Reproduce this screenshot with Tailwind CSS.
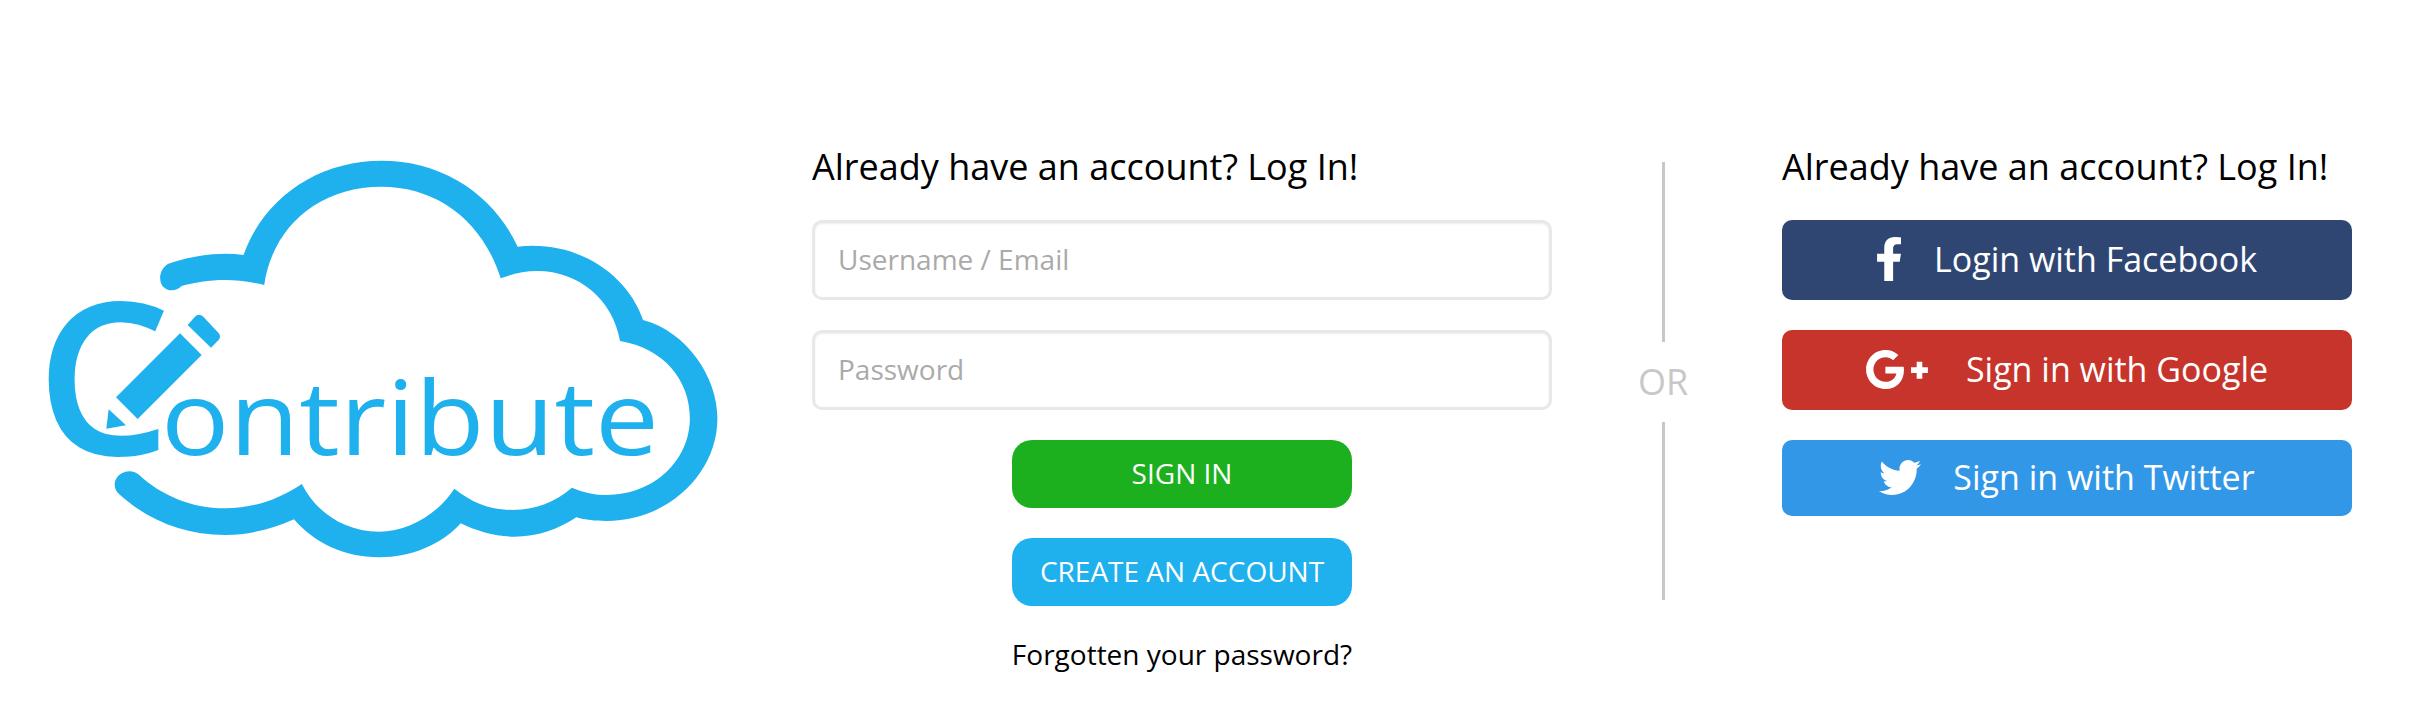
<!doctype html>
<html lang="en">
<head>
<meta charset="utf-8">
<title>Contribute login</title>
<script src="https://cdn.jsdelivr.net/npm/@tailwindcss/browser@4"></script>
</head>
<body class="bg-white font-['Open_Sans',sans-serif] text-black overflow-hidden">
<main class="flex items-start h-[710px] pt-[140px] pl-[30px]">
  <svg class="shrink-0 w-[720px] h-[440px]" viewBox="0 0 720 440" aria-label="Contribute logo">
    <g fill="#1fb0ee">
      <g transform="scale(0.4592 0.3333)">
        <path d="M300 372C350 348 410 335 465 345C510 170 630 62 765 62C900 62 1010 165 1062 320C1190 300 1300 400 1335 540C1430 575 1497 710 1497 835C1497 1000 1390 1143 1255 1143C1230 1143 1210 1140 1190 1132C1150 1168 1105 1190 1055 1190C1015 1190 975 1175 938 1150C895 1215 830 1252 760 1252C685 1252 620 1210 575 1138C530 1165 480 1185 425 1185C335 1185 255 1140 192 1060C178 1040 185 1010 200 1000C212 990 228 992 238 1005C285 1065 350 1105 425 1105C490 1105 545 1075 592 1032C620 1110 680 1175 760 1175C825 1175 890 1120 924 1046C960 1085 1000 1110 1050 1110C1100 1110 1145 1085 1180 1043C1205 1058 1230 1065 1255 1065C1360 1065 1437 960 1437 835C1437 720 1380 625 1285 603C1270 480 1195 393 1105 393C1075 393 1050 402 1025 415C985 240 885 140 765 140C628 140 528 262 510 435C480 425 450 420 425 420C390 420 355 428 330 438C318 455 300 455 290 440C280 425 280 390 300 372Z"/>
      </g>
      <g transform="translate(0 140) scale(0.3333)">
        <path d="M450 160L515 225L323 417L258 352Z"/>
        <path d="M236 388L288 436L229 446Z"/>
        <path d="M473 135L495 110C502 102 512 102 520 110L565 158C572 165 572 174 565 181L543 203Z"/>
      </g>
      <text x="6" y="315" font-size="213" font-weight="600">C</text>
      <text x="131" y="315" font-size="103" textLength="498" lengthAdjust="spacingAndGlyphs">ontribute</text>
    </g>
  </svg>

  <section class="shrink-0 ml-[62px] w-[740px] flex flex-col">
    <h2 class="h-[80px] text-[36px] leading-[54px]">Already have an account? Log In!</h2>
    <input class="h-[80px] w-full rounded-[10px] border-[3px] border-[#e8e8e8] pl-[23px] pr-[24px] pb-[2px] text-[28px] placeholder:text-[#aaaaaa] shadow-[inset_0_1px_2px_rgba(0,0,0,0.08)]" placeholder="Username / Email">
    <input class="mt-[30px] h-[80px] w-full rounded-[10px] border-[3px] border-[#e8e8e8] pl-[23px] pr-[24px] pb-[2px] text-[28px] placeholder:text-[#aaaaaa] shadow-[inset_0_1px_2px_rgba(0,0,0,0.08)]" placeholder="Password">
    <div class="mt-[30px] flex flex-col items-center gap-[30px]">
      <button class="h-[68px] w-[340px] pb-[2px] rounded-[20px] bg-[#1cb01f] text-[28px] text-white">SIGN IN</button>
      <button class="h-[68px] w-[340px] pb-[2px] rounded-[20px] bg-[#1fb0ee] text-[28px] text-white">CREATE AN ACCOUNT</button>
      <a class="text-[28px] leading-[40px] -mt-[2px]">Forgotten your password?</a>
    </div>
  </section>

  <div class="shrink-0 ml-[61px] w-[100px] flex flex-col items-center pt-[22px]">
    <div class="h-[180px] w-[3px] bg-[#c8c8c8]"></div>
    <div class="h-[80px] flex items-center text-[36px] text-[#c8c8c8]">OR</div>
    <div class="h-[178px] w-[3px] bg-[#c8c8c8]"></div>
  </div>

  <section class="shrink-0 ml-[69px] w-[570px] flex flex-col">
    <h2 class="h-[80px] text-[36px] leading-[54px]">Already have an account? Log In!</h2>
    <button class="h-[80px] pb-[2px] rounded-[10px] bg-[#2f4673] text-white text-[34px] flex items-center justify-center gap-[33px]">
      <svg class="w-[24px] h-[44px]" viewBox="22 0 272 512" preserveAspectRatio="none" fill="currentColor"><path d="M279.14 288l14.22-92.66h-88.91v-60.13c0-25.35 12.42-50.06 52.24-50.06h40.42V6.26S260.43 0 225.36 0c-73.22 0-121.08 44.38-121.08 124.72v70.62H22.89V288h81.39v224h100.17V288z"/></svg>
      <span>Login with Facebook</span>
    </button>
    <button class="mt-[30px] h-[80px] pb-[2px] rounded-[10px] bg-[#c7342b] text-white text-[34px] flex items-center justify-center gap-[38px]">
      <svg class="w-[62px] h-[39px]" viewBox="12 64 616 384" preserveAspectRatio="none" fill="currentColor"><path d="M386.061 228.496c1.834 9.692 3.143 19.384 3.143 31.956C389.204 370.205 315.599 448 204.8 448c-106.084 0-192-85.915-192-192s85.916-192 192-192c51.864 0 95.083 18.859 128.611 50.292l-52.126 50.03c-14.145-13.621-39.028-29.599-76.485-29.599-65.484 0-118.92 54.221-118.92 121.277 0 67.056 53.436 121.277 118.92 121.277 75.961 0 104.513-54.745 108.965-82.773H204.8v-66.009h181.261zm185.406 6.437V179.2h-56.001v55.733h-55.733v56.001h55.733v55.733h56.001v-55.733H627.2v-56.001h-55.733z"/></svg>
      <span>Sign in with Google</span>
    </button>
    <button class="mt-[30px] h-[76px] pb-[2px] rounded-[10px] bg-[#3297e6] text-white text-[34px] flex items-center justify-center gap-[32px]">
      <svg class="w-[42px] h-[35px]" viewBox="0 48 512 416" preserveAspectRatio="none" fill="currentColor"><path d="M459.37 151.716c.325 4.548.325 9.097.325 13.645 0 138.72-105.583 298.558-298.558 298.558-59.452 0-114.68-17.219-161.137-47.106 8.447.974 16.568 1.299 25.34 1.299 49.055 0 94.213-16.568 130.274-44.832-46.132-.975-84.792-31.188-98.112-72.772 6.498.974 12.995 1.624 19.818 1.624 9.421 0 18.843-1.3 27.614-3.573-48.081-9.747-84.143-51.98-84.143-102.985v-1.299c13.969 7.797 30.214 12.67 47.431 13.319-28.264-18.843-46.781-51.005-46.781-87.391 0-19.492 5.197-37.36 14.294-52.954 51.655 63.675 129.3 105.258 216.365 109.807-1.624-7.797-2.599-15.918-2.599-24.04 0-57.828 46.782-104.934 104.934-104.934 30.213 0 57.502 12.67 76.67 33.137 23.715-4.548 46.456-13.32 66.599-25.34-7.798 24.366-24.366 44.833-46.132 57.827 21.117-2.273 41.584-8.122 60.426-16.243-14.292 20.791-32.161 39.308-52.628 54.253z"/></svg>
      <span>Sign in with Twitter</span>
    </button>
  </section>
</main>
</body>
</html>
